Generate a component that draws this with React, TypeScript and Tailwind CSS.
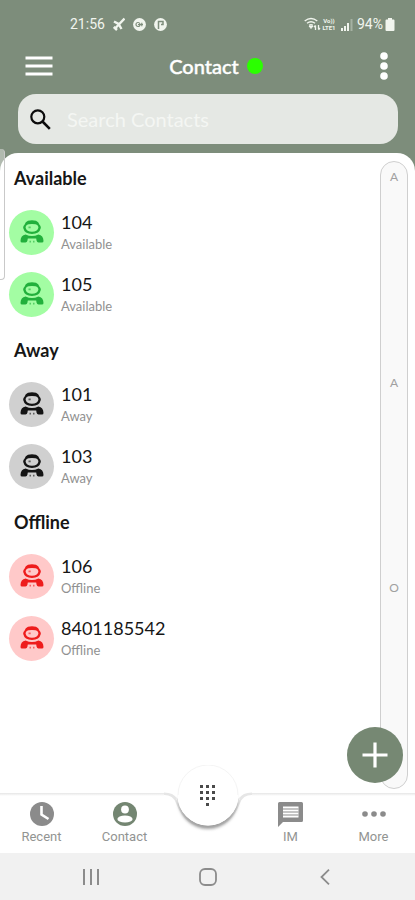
import React from "react";

type Tone = "available" | "away" | "offline";

const tones: Record<Tone, string> = {
  available: "bg-[#a3fda3] text-[#22b03c]",
  away: "bg-[#d0d0d0] text-[#141414]",
  offline: "bg-[#ffc9c9] text-[#ee1c1c]",
};

const groups: { title: string; tone: Tone; contacts: string[] }[] = [
  { title: "Available", tone: "available", contacts: ["104", "105"] },
  { title: "Away", tone: "away", contacts: ["101", "103"] },
  { title: "Offline", tone: "offline", contacts: ["106", "8401185542"] },
];

function Astronaut() {
  return (
    <svg width="24" height="24" viewBox="0 0 24 24" aria-hidden="true">
      <path
        fill="currentColor"
        fillRule="evenodd"
        d="M8 .8Q12-.3 16 .8Q18.600 1.700 19.500 4.800Q21 6 20.800 8Q19.500 13.800 12 14Q4.500 13.800 3.200 8Q3 6 4.500 4.800Q5.400 1.700 8 .8ZM8.500 4.300Q5.600 5 5.600 7.800Q6.600 11.700 12 11.800Q17.400 11.700 18.400 7.800Q18.400 5 15.500 4.300Q12 3.800 8.500 4.300Z"
      />
      <path
        fill="currentColor"
        d="M.5 21Q.6 15.600 5.600 14.600Q12 17.600 18.400 14.600Q23.400 15.600 23.500 21Q23.500 22.600 22 22.600H18.500Q17 22.600 16.600 20.800L16.200 18.600H7.800L7.400 20.800Q7 22.600 5.500 22.600H2Q.5 22.600 .5 21Z"
      />
      <path fill="currentColor" d="M8.500 6.500h2.200v1.800H8.500zM9.500 20.800H11v1.600H9.500zM13 20.800h1.500v1.600H13z" opacity=".6" />
    </svg>
  );
}

function StatusBar() {
  return (
    <div className="flex h-12 items-center justify-between pl-[70px] pr-5 font-['Roboto',sans-serif] text-sm text-[#f1f5ee]">
      <div className="flex items-center gap-2">
        <span>21:56</span>
        <svg width="12" height="14" viewBox="0 0 12 14" fill="none" stroke="currentColor" strokeWidth="2.4" aria-hidden="true">
          <path d="M11.5 1.5 3 10.500M1 4.500l4.500 2.500 3 5M.8 10l3.200 3" />
        </svg>
        <svg width="13" height="13" viewBox="0 0 13 13" aria-hidden="true">
          <circle cx="6.5" cy="6.5" r="6.4" fill="currentColor" />
          <circle cx="5" cy="6.5" r="2" fill="none" stroke="#7d8d7b" strokeWidth="1.2" />
          <path d="M5 6.5h5M8.8 4.8v3.4" stroke="#7d8d7b" strokeWidth="1.2" />
        </svg>
        <svg width="13" height="13" viewBox="0 0 13 13" aria-hidden="true">
          <circle cx="6.5" cy="6.5" r="6.4" fill="currentColor" />
          <path d="M4.500 11V3.500H9v3H7" fill="none" stroke="#7d8d7b" strokeWidth="1.5" />
        </svg>
      </div>
      <div className="flex items-center">
        <svg width="17" height="14" viewBox="0 0 17 14" fill="none" stroke="currentColor" aria-hidden="true">
          <path d="M.7 4Q7 -1 13.3 4M3 6.2q4-3 8 0M5.2 8.3q1.8-1.3 3.6 0" strokeWidth="1.4" />
          <path d="m7 11.5-2-2.5h4z" fill="currentColor" />
          <path d="M11.5 13V8.5M10 10l1.5-1.6M14.5 8v4.5M16 11l-1.5 1.7" strokeWidth="1.3" />
        </svg>
        <span className="flex w-4 flex-col text-center text-[6px] font-bold leading-[7px]">
          <span>Vo))</span>
          <span>LTE1</span>
        </span>
        <svg className="ml-1" width="12" height="13" viewBox="0 0 12 13" aria-hidden="true">
          <path d="M0 10h2v3H0zM3 8h2v5H3zM6 5h2v8H6z" fill="currentColor" />
          <path d="M9.5 1h2v12h-2z" fill="currentColor" opacity=".35" />
        </svg>
        <span className="ml-1">94%</span>
        <svg className="ml-0.5" width="10" height="13" viewBox="0 0 10 13" fill="currentColor" aria-hidden="true">
          <path d="M3 0h4v1.5h1.5q1 0 1 1V12q0 1-1 1h-7q-1 0-1-1V2.5q0-1 1-1H3z" />
        </svg>
      </div>
    </div>
  );
}

function Header() {
  return (
    <header className="grid h-[46px] grid-cols-3 items-start pl-6 pr-[23px]">
      <button aria-label="Open menu" className="flex h-9 w-8 items-center justify-start">
        <svg width="30" height="20" viewBox="0 0 30 20" stroke="#fff" strokeWidth="3" aria-hidden="true">
          <path d="M1.5 2h27M1.5 10h27M1.5 18h27" />
        </svg>
      </button>
      <div className="flex h-9 items-center justify-center gap-2 justify-self-center pl-4">
        <h1 className="text-[20px] font-medium text-white [-webkit-text-stroke:0.4px_white]">Contact</h1>
        <span className="size-4 rounded-full bg-[#2bff00]" />
      </div>
      <button aria-label="More options" className="flex h-9 w-4 items-center justify-center justify-self-end">
        <svg width="8" height="28" viewBox="0 0 8 28" fill="#fff" aria-hidden="true">
          <circle cx="4" cy="4" r="3.8" />
          <circle cx="4" cy="14" r="3.8" />
          <circle cx="4" cy="24" r="3.8" />
        </svg>
      </button>
    </header>
  );
}

function ContactRow({ name, status, tone }: { name: string; status: string; tone: Tone }) {
  return (
    <li className="flex h-[62px] items-center gap-[7px] pl-[9px]">
      <span className={`flex size-[45px] items-center justify-center rounded-full ${tones[tone]}`}>
        <Astronaut />
      </span>
      <span className="flex flex-col">
        <span className="text-[18px] leading-6 text-[#161616]">{name}</span>
        <span className="text-[13px] leading-5 text-[#919191]">{status}</span>
      </span>
    </li>
  );
}

function NavItem({ label, active, children }: { label: string; active?: boolean; children: React.ReactNode }) {
  return (
    <a
      href={`#${label.toLowerCase()}`}
      className={`flex flex-col items-center pt-2 ${active ? "text-[#748672]" : "text-[#8b8b8b]"}`}
    >
      <span className="flex h-[26px] items-center">{children}</span>
      <span className="font-['Roboto',sans-serif] text-[13px] leading-5 text-[#929492]">{label}</span>
    </a>
  );
}

function BottomNav() {
  return (
    <nav className="relative h-[60px] bg-white">
      <div className="absolute inset-x-0 top-0 flex">
        <div className="h-[3px] flex-1 bg-gradient-to-b from-[#e6e6e6] to-white" />
        <svg className="-mt-7" width="88" height="70" viewBox="0 0 88 70" aria-hidden="true">
          <defs>
            <filter id="soft" x="-20%" y="-20%" width="140%" height="140%">
              <feGaussianBlur stdDeviation="1.8" />
            </filter>
          </defs>
          <path
            d="M0 29Q10 29 13 38Q22 62 44 62Q66 62 75 38Q78 29 88 29"
            fill="none"
            stroke="#e6e6e6"
            strokeWidth="2"
          />
          <circle cx="44" cy="34" r="30" fill="#a0a0a0" filter="url(#soft)" />
          <path d="M0 0H88V28Q77 28 74 34H14Q11 28 0 28Z" fill="#fff" />
          <path d="M0 28.500Q9 28.500 12 34M88 28.500Q79 28.500 76 34" fill="none" stroke="#e6e6e6" strokeWidth="2" />
          <circle cx="44" cy="30" r="30" fill="#fff" stroke="#f4f4f4" />
          <path d="M13.500 30a30.500 30.500 0 0 0 61 0z" fill="#fff" />
        </svg>
        <div className="h-[3px] flex-1 bg-gradient-to-b from-[#e6e6e6] to-white" />
      </div>
      <div className="relative grid h-full grid-cols-5">
        <NavItem label="Recent">
          <svg width="24" height="24" viewBox="0 0 24 24" aria-hidden="true">
            <circle cx="12" cy="12" r="12" fill="currentColor" />
            <path d="M11.5 4v8.5l7 4.500" fill="none" stroke="#fff" strokeWidth="2.6" />
          </svg>
        </NavItem>
        <NavItem label="Contact" active>
          <svg width="24" height="24" viewBox="0 0 24 24" aria-hidden="true">
            <circle cx="12" cy="12" r="12" fill="currentColor" />
            <circle cx="12" cy="7.5" r="3.9" fill="#fff" />
            <ellipse cx="12" cy="17" rx="7.6" ry="3.6" fill="#fff" />
          </svg>
        </NavItem>
        <button aria-label="Dial pad" className="-mt-7 flex size-[60px] items-center justify-center justify-self-center rounded-full">
          <svg width="17" height="21" viewBox="0 0 17 21" fill="#4a4a4a" aria-hidden="true">
            <path d="M1 0h3v3H1zM7 0h3v3H7zM13 0h3v3h-3zM1 6h3v3H1zM7 6h3v3H7zM13 6h3v3h-3zM1 12h3v3H1zM7 12h3v3H7zM13 12h3v3h-3zM7 18h3v3H7z" />
          </svg>
        </button>
        <NavItem label="IM">
          <svg width="25" height="25" viewBox="0 0 25 25" aria-hidden="true">
            <path d="M1.5 0h22Q25 0 25 1.5v17q0 1.500-1.500 1.500H5l-5 5V1.500Q0 0 1.500 0Z" fill="currentColor" />
            <path d="M5 4.5h15.500v11H5z" fill="#fff" />
            <path d="M5 7h15.500M5 10h15.500M5 13h15.500" stroke="currentColor" strokeWidth="1.1" />
          </svg>
        </NavItem>
        <NavItem label="More">
          <svg width="24" height="6" viewBox="0 0 24 6" fill="currentColor" aria-hidden="true">
            <circle cx="3" cy="3" r="2.8" />
            <circle cx="12" cy="3" r="2.8" />
            <circle cx="21" cy="3" r="2.8" />
          </svg>
        </NavItem>
      </div>
    </nav>
  );
}

function SystemBar() {
  return (
    <div className="grid h-[47px] grid-cols-3 items-center bg-[#f1f1f1] px-8 text-[#8c8c8c]">
      <button aria-label="Recent apps" className="justify-self-center">
        <svg width="16" height="16" viewBox="0 0 16 16" stroke="currentColor" strokeWidth="2" aria-hidden="true">
          <path d="M1 0v16M8 0v16M15 0v16" />
        </svg>
      </button>
      <button aria-label="Home" className="justify-self-center">
        <svg width="18" height="18" viewBox="0 0 18 18" fill="none" stroke="currentColor" strokeWidth="1.8" aria-hidden="true">
          <rect x="1" y="1" width="16" height="16" rx="5" />
        </svg>
      </button>
      <button aria-label="Back" className="justify-self-center">
        <svg width="10" height="16" viewBox="0 0 10 16" fill="none" stroke="currentColor" strokeWidth="1.8" aria-hidden="true">
          <path d="M9 .7 1.5 8 9 15.3" />
        </svg>
      </button>
    </div>
  );
}

export default function App() {
  return (
    <div className="relative flex min-h-screen flex-col bg-[#7d8d7b] font-['Lato',sans-serif]">
      <StatusBar />
      <Header />
      <label className="ml-[18px] mr-[17px] flex h-[50px] items-center gap-4 rounded-[18px] bg-[#e5e8e4] pl-3 pr-4">
        <svg width="21" height="21" viewBox="0 0 21 21" fill="none" stroke="#0c0c0c" aria-hidden="true">
          <circle cx="7.8" cy="7.8" r="6.5" strokeWidth="2.2" />
          <path d="m12.500 12.500 7.300 7.300" strokeWidth="2.6" />
        </svg>
        <input
          type="search"
          aria-label="Search Contacts"
          placeholder="Search Contacts"
          className="min-w-0 flex-1 bg-transparent text-[20px] text-[#333] outline-none placeholder:text-[#f4f6f3]"
        />
      </label>
      <main className="relative mt-[9px] flex flex-1 rounded-t-[18px] bg-white">
        <div className="flex-1">
          {groups.map((group) => (
            <section key={group.title}>
              <h2 className="flex h-12 items-center pl-[14px] pt-0.5 text-[18px] font-bold text-[#161616]">{group.title}</h2>
              <ul>
                {group.contacts.map((name) => (
                  <ContactRow key={name} name={name} status={group.title} tone={group.tone} />
                ))}
              </ul>
            </section>
          ))}
        </div>
        <div className="mb-1 mr-[7px] mt-2 flex w-7 flex-col rounded-full border border-[#cfcfcf] bg-[#f9f9f9] pb-1 pt-[5px] text-center text-[12px] leading-5 text-[#a0a0a0]">
          {["A", "A", "O"].map((letter, index) => (
            <a key={index} href={`#section-${index}`} className="flex-1">
              {letter}
            </a>
          ))}
        </div>
        <button
          aria-label="Add contact"
          className="absolute bottom-[10px] right-3 flex size-14 items-center justify-center rounded-full bg-[#768873]"
        >
          <svg width="26" height="26" viewBox="0 0 26 26" stroke="#fff" strokeWidth="3.2" aria-hidden="true">
            <path d="M13 .5v25M.5 13h25" />
          </svg>
        </button>
      </main>
      <BottomNav />
      <SystemBar />
      <div className="absolute left-0 top-[149px] h-[131px] w-[5px] rounded-r-[4px] border-b border-r border-[#c9c9c9] bg-white/40" />
    </div>
  );
}
